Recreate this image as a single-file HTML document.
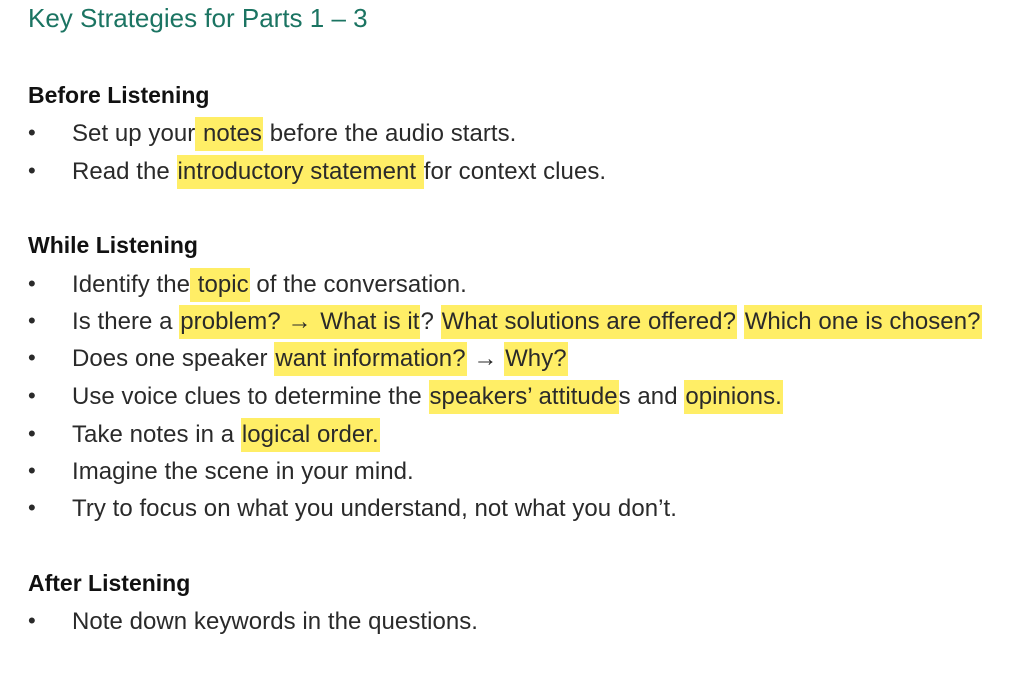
<!DOCTYPE html>
<html><head><meta charset="utf-8"><style>
html,body{margin:0;padding:0;background:#fff;width:1036px;height:673px;overflow:hidden}
body{font-family:"Liberation Sans",sans-serif;color:#1a1a1a;position:relative}
.t{position:absolute;left:28px;top:3px;font-size:26px;color:#1b7462;white-space:nowrap}
.h{position:absolute;left:28px;font-size:23px;font-weight:bold;color:#111;white-space:nowrap}
.l{position:absolute;left:0;font-size:24px;letter-spacing:0.05px;color:#2a2a2a;white-space:nowrap;height:36px;line-height:36px}
.l .b{position:absolute;left:28px;font-size:22px}
.l .x{position:absolute;left:72px;top:1px}
.hl{background:#ffee66;padding:3px 1px 4px 1px}
.ar{font-weight:bold}
</style></head><body>
<div class="t">Key Strategies for Parts 1 – 3</div>
<div class="h" style="top:82px">Before Listening</div>
<div class="l" style="top:115px"><span class="b">•</span><span class="x">Set up your<span class="hl"> notes</span> before the audio starts.</span></div>
<div class="l" style="top:153px"><span class="b">•</span><span class="x">Read the <span class="hl">introductory statement </span>for context clues.</span></div>
<div class="h" style="top:232px">While Listening</div>
<div class="l" style="top:266px"><span class="b">•</span><span class="x">Identify the<span class="hl"> topic</span> of the conversation.</span></div>
<div class="l" style="top:303px"><span class="b">•</span><span class="x">Is there a <span class="hl">problem? <span class="ar">→</span> </span> <span class="hl">What is it</span>? <span class="hl">What solutions are offered?</span> <span class="hl">Which one is chosen?</span></span></div>
<div class="l" style="top:340px"><span class="b">•</span><span class="x">Does one speaker <span class="hl">want information?</span> <span class="ar">→</span> <span class="hl">Why? </span></span></div>
<div class="l" style="top:378px"><span class="b">•</span><span class="x">Use voice clues to determine the <span class="hl">speakers’ attitude</span>s and <span class="hl">opinions. </span></span></div>
<div class="l" style="top:416px"><span class="b">•</span><span class="x">Take notes in a <span class="hl">logical order.</span></span></div>
<div class="l" style="top:453px"><span class="b">•</span><span class="x">Imagine the scene in your mind.</span></div>
<div class="l" style="top:490px"><span class="b">•</span><span class="x">Try to focus on what you understand, not what you don’t.</span></div>
<div class="h" style="top:570px">After Listening</div>
<div class="l" style="top:603px"><span class="b">•</span><span class="x">Note down keywords in the questions.</span></div>
</body></html>
